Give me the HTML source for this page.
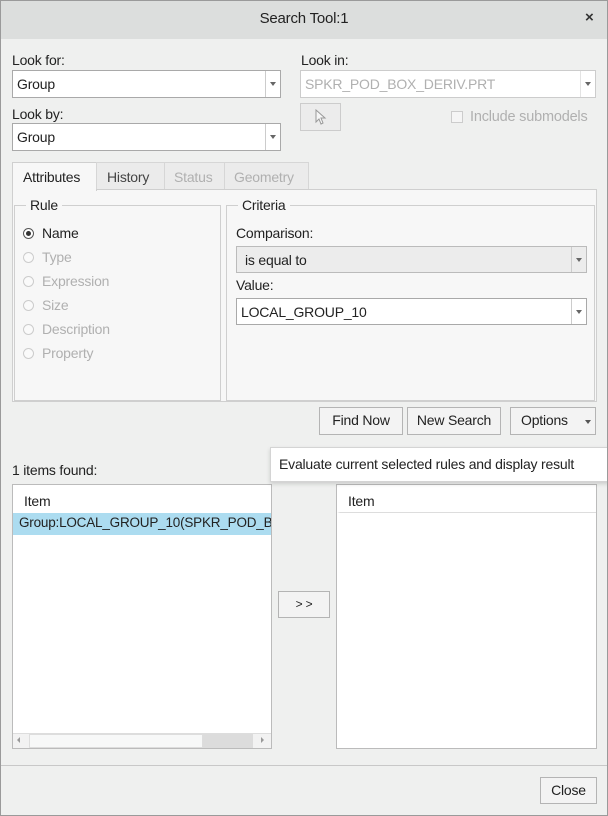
<!DOCTYPE html>
<html><head><style>
*{box-sizing:border-box;margin:0;padding:0}
body{width:608px;height:816px;background:#eff0ef;font-family:"Liberation Sans",sans-serif;font-size:14px;color:#222;position:relative;overflow:hidden;letter-spacing:-0.2px}
.a{position:absolute;white-space:nowrap}
.frame{position:absolute;left:0;top:0;width:608px;height:816px;border:1px solid #9a9a9a}
.box{position:absolute;background:#fff;border:1px solid #a9a9a9}
.combo .t{position:absolute;left:4px;top:5px}
.combo .dd{position:absolute;right:0;top:0;bottom:0;width:15px;border-left:1px solid #ccc}
.combo .dd:after{content:"";position:absolute;left:4px;top:11px;border-left:3px solid transparent;border-right:3px solid transparent;border-top:4px solid #666}
.btn{position:absolute;background:#f3f3f3;border:1px solid #b4b4b4;text-align:center;line-height:25px}
.gray{color:#b0b0b0}
.radio{position:absolute;width:11px;height:11px;border:1px solid #ccc;border-radius:50%;background:#fafafa}
</style></head><body>
<div class="a" style="left:0;top:0;width:608px;height:39px;background:#dcdedd"></div>
<div class="a" style="left:0;top:10px;width:608px;text-align:center;font-size:15px">Search Tool:1</div>
<div class="a" style="left:585px;top:9px;font-size:15px;font-weight:bold;color:#333">×</div>

<div class="a" style="left:12px;top:52px">Look for:</div>
<div class="box combo" style="left:12px;top:70px;width:269px;height:28px"><span class="t">Group</span><span class="dd"></span></div>
<div class="a" style="left:12px;top:106px">Look by:</div>
<div class="box combo" style="left:12px;top:123px;width:269px;height:28px"><span class="t">Group</span><span class="dd"></span></div>
<div class="a" style="left:301px;top:52px">Look in:</div>
<div class="box combo" style="left:300px;top:70px;width:296px;height:28px;border-color:#ccc"><span class="t gray">SPKR_POD_BOX_DERIV.PRT</span><span class="dd" style="border-color:#e3e3e3"></span></div>
<div class="a" style="left:300px;top:103px;width:41px;height:28px;border:1px solid #ccc;background:#ececec"></div>
<svg class="a" style="left:314px;top:109px" width="14" height="16" viewBox="0 0 14 16"><path d="M2 1 L2 13 L5 10 L7 15 L9 14 L7 9 L11 9 Z" fill="#f6f6f6" stroke="#999"/></svg>
<div class="a" style="left:451px;top:111px;width:12px;height:12px;border:1px solid #ccc;background:#f5f5f5"></div>
<div class="a gray" style="left:470px;top:109px;font-size:14.5px">Include submodels</div>

<div class="a" style="left:12px;top:189px;width:585px;height:213px;background:#f7f7f7;border:1px solid #cfcfcf"></div>
<div class="a" style="left:12px;top:162px;width:85px;height:29px;background:#f7f7f7;border:1px solid #cfcfcf;border-bottom:none;padding:6px 0 0 10px">Attributes</div>
<div class="a" style="left:96px;top:162px;width:69px;height:27px;background:#ebebeb;border:1px solid #d6d6d6;border-bottom:none;padding:6px 0 0 10px;color:#444">History</div>
<div class="a gray" style="left:164px;top:162px;width:61px;height:27px;background:#ebebeb;border:1px solid #d6d6d6;border-bottom:none;padding:6px 0 0 9px">Status</div>
<div class="a gray" style="left:224px;top:162px;width:85px;height:27px;background:#ebebeb;border:1px solid #d6d6d6;border-bottom:none;padding:6px 0 0 9px">Geometry</div>

<div class="a" style="left:14px;top:205px;width:207px;height:196px;border:1px solid #cfcfcf"></div>
<div class="a" style="left:26px;top:197px;background:#f7f7f7;padding:0 4px">Rule</div>
<div class="a" style="left:226px;top:205px;width:369px;height:196px;border:1px solid #cfcfcf"></div>
<div class="a" style="left:238px;top:197px;background:#f7f7f7;padding:0 4px">Criteria</div>

<div class="radio" style="left:23px;top:228px;border-color:#555;background:#fff"></div>
<div class="a" style="left:26px;top:231px;width:5px;height:5px;border-radius:50%;background:#333"></div>
<div class="a" style="left:42px;top:225px">Name</div>
<div class="radio" style="left:23px;top:252px"></div><div class="a gray" style="left:42px;top:249px">Type</div>
<div class="radio" style="left:23px;top:276px"></div><div class="a gray" style="left:42px;top:273px">Expression</div>
<div class="radio" style="left:23px;top:300px"></div><div class="a gray" style="left:42px;top:297px">Size</div>
<div class="radio" style="left:23px;top:324px"></div><div class="a gray" style="left:42px;top:321px">Description</div>
<div class="radio" style="left:23px;top:348px"></div><div class="a gray" style="left:42px;top:345px">Property</div>

<div class="a" style="left:236px;top:225px">Comparison:</div>
<div class="box combo" style="left:236px;top:246px;width:351px;height:27px;background:#ececec;border-color:#bbb"><span class="t" style="left:8px">is equal to</span><span class="dd"></span></div>
<div class="a" style="left:236px;top:277px">Value:</div>
<div class="box combo" style="left:236px;top:298px;width:351px;height:27px"><span class="t">LOCAL_GROUP_10</span><span class="dd"></span></div>

<div class="btn" style="left:319px;top:407px;width:84px;height:28px">Find Now</div>
<div class="btn" style="left:407px;top:407px;width:94px;height:28px">New Search</div>
<div class="btn" style="left:510px;top:407px;width:86px;height:28px;text-align:left;padding-left:10px">Options</div>
<div class="a" style="left:585px;top:420px;border-left:3px solid transparent;border-right:3px solid transparent;border-top:4px solid #555"></div>

<div class="a" style="left:12px;top:462px">1 items found:</div>
<div class="box" style="left:12px;top:484px;width:260px;height:265px;border-color:#bbb;overflow:hidden">
 <div class="a" style="left:11px;top:8px">Item</div>
 <div class="a" style="left:0;top:28px;width:260px;height:22px;background:#acdcf0;padding:2px 0 0 6px;font-size:13.5px">Group:LOCAL_GROUP_10(SPKR_POD_BOX_DERIV)</div>
 <div class="a" style="left:0;top:248px;width:258px;height:16px;background:#f2f2f2;border-top:1px solid #ddd"></div>
 <div class="a" style="left:16px;top:249px;width:174px;height:14px;background:#f7f8f8;border:1px solid #ddd"></div>
 <div class="a" style="left:190px;top:249px;width:50px;height:14px;background:#dcdcdc"></div>
 <div class="a" style="left:4px;top:252px;border-top:3px solid transparent;border-bottom:3px solid transparent;border-right:3px solid #999"></div>
 <div class="a" style="left:248px;top:252px;border-top:3px solid transparent;border-bottom:3px solid transparent;border-left:3px solid #999"></div>
</div>
<div class="btn" style="left:278px;top:591px;width:52px;height:27px;font-size:12px">&gt; &gt;</div>
<div class="box" style="left:336px;top:484px;width:261px;height:265px;border-color:#bbb">
 <div class="a" style="left:0;top:0;width:259px;height:28px;border-bottom:1px solid #ddd;border-left:3px solid #fff"></div>
 <div class="a" style="left:11px;top:8px">Item</div>
</div>

<div class="a" style="left:270px;top:447px;width:340px;height:35px;background:#fff;border:1px solid #d4d4d4;box-shadow:0 2px 4px rgba(0,0,0,.15);padding:8px 0 0 8px">Evaluate current selected rules and display result</div>

<div class="a" style="left:1px;top:765px;width:606px;height:1px;background:#c8c8c8"></div>
<div class="btn" style="left:540px;top:777px;width:57px;height:27px">Close</div>
<div class="frame"></div>
</body></html>
